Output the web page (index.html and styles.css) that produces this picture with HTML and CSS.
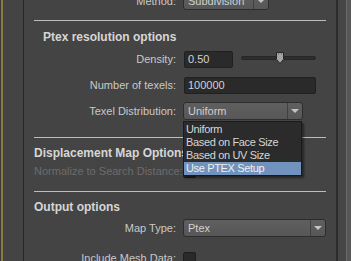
FILE: index.html
```html
<!DOCTYPE html>
<html lang="en">

<head>
    <meta charset="UTF-8">
    <meta name="viewport" content="width=device-width, initial-scale=1.0">
    <title>Ptex options</title>
    <link rel="stylesheet" href="styles.css">
</head>

<body>
    <div class="window">
        <div class="edge"></div>
        <div class="gutter"></div>

        <div class="frame">
            <div class="row row-method">
                <span class="label">Method:</span>
                <div class="combo combo-method"><span class="combo-text">Subdivision</span><span class="combo-btn"><i class="arrow"></i></span></div>
            </div>

            <hr class="sep sep-first">

            <h3 class="heading heading-ptex">Ptex resolution options</h3>

            <div class="row row-density">
                <span class="label">Density:</span>
                <div class="field field-density">0.50</div>
                <div class="slider">
                    <div class="track"></div>
                    <svg class="thumb" width="10" height="12" viewBox="0 0 10 12">
                        <path d="M1.5 0.5 H8.5 V7.5 L5 11.5 L1.5 7.5 Z" fill="#a4a4a4" stroke="#262626" stroke-width="1"/>
                        <path d="M3 2 H4 M6 2 H7" stroke="#555" stroke-width="1"/>
                    </svg>
                </div>
            </div>

            <div class="row">
                <span class="label">Number of texels:</span>
                <div class="field field-texels">100000</div>
            </div>

            <div class="row row-dist">
                <span class="label">Texel Distribution:</span>
                <div class="combo combo-dist"><span class="combo-text">Uniform</span><span class="combo-btn"><i class="arrow"></i></span></div>

                <!-- open popup list -->
                <ul class="menu">
                    <li>Uniform</li>
                    <li>Based on Face Size</li>
                    <li>Based on UV Size</li>
                    <li class="active">Use PTEX Setup</li>
                </ul>
            </div>

            <hr class="sep sep-second">

            <h3 class="heading">Displacement Map Options</h3>

            <div class="row row-normalize">
                <span class="label label-left disabled">Normalize to Search Distance:</span>
                <div class="check"></div>
            </div>

            <hr class="sep sep-third">

            <h3 class="heading">Output options</h3>

            <div class="row row-maptype">
                <span class="label">Map Type:</span>
                <div class="combo combo-map"><span class="combo-text">Ptex</span><span class="combo-btn"><i class="arrow"></i></span></div>
            </div>

            <div class="row row-mesh">
                <span class="label">Include Mesh Data:</span>
                <div class="check"></div>
            </div>
        </div>

        <div class="gutter-right"></div>
        <div class="scroll"></div>
    </div>
</body>

</html>
```

FILE: styles.css
```css
* {
    padding: 0;
    margin: 0;
    box-sizing: border-box;
}

body {
    background: #444444;
    font-family: "Liberation Sans", Arial, sans-serif;
    font-size: 11px;
    color: #c9c9c9;
    overflow: hidden;
}

div.window {
    display: flex;
    width: 351px;
    height: 261px;
    overflow: hidden;
}

.edge {
    width: 3px;
    border-left: 1px solid #3a3a3a;
    background: #8d7b3c;
}

.gutter {
    width: 20px;
    background: #444444;
}

div.frame {
    width: 315px;
    border-left: 1px solid #262626;
    border-right: 2px solid #2c2c2c;
    background: #444444;
    display: flex;
    flex-direction: column;
}

.gutter-right {
    width: 8px;
    background: #464646;
}

.scroll {
    flex: 1;
    border-left: 1px solid #6a6a6a;
    background: #575757;
}

/* rows */
.row {
    position: relative;
    display: flex;
    align-items: center;
    height: 18px;
    flex-shrink: 0;
}

.label {
    width: 152px;
    flex-shrink: 0;
    text-align: right;
    line-height: 13px;
    margin-right: 7px;
    white-space: nowrap;
}

.label-left {
    text-align: left;
    padding-left: 10px;
}

.disabled {
    color: #6c6c6c;
}

.row-method {
    margin-top: -8px;
}

.row-density {
    margin-top: 6px;
}

.row + .row {
    margin-top: 8px;
}

.row-normalize {
    margin-top: 2px;
}

.row-maptype {
    margin-top: 5px;
}

.row.row-mesh {
    margin-top: 12px;
}

/* separators */
.sep {
    border: none;
    height: 1px;
    background: #bdbdbd;
    margin: 0 10px;
    flex-shrink: 0;
}

.sep-first {
    margin-top: 10px;
}

.sep-second {
    margin-top: 17px;
}

.sep-third {
    margin-top: 11px;
}

.heading {
    font-size: 12px;
    font-weight: bold;
    line-height: 13px;
    color: #d6d6d6;
    padding-left: 10px;
    margin-top: 9px;
    white-space: nowrap;
}

.heading-ptex {
    padding-left: 19px;
    margin-top: 10px;
}

/* text fields */
.field {
    height: 17px;
    margin-left: 1px;
    background: #2a2a2a;
    border: 1px solid #202020;
    border-radius: 2px;
    padding-left: 3px;
    line-height: 15px;
    color: #d2d2d2;
    font-size: 11px;
}

.field-density {
    width: 49px;
}

.field-texels {
    width: 132px;
}

/* slider */
.slider {
    position: relative;
    width: 75px;
    height: 18px;
    margin-left: 8px;
}

.track {
    position: absolute;
    left: 0;
    right: 0;
    top: 6px;
    height: 4px;
    background: #2e2e2e;
    border: 1px solid #262626;
    border-radius: 2px;
}

.thumb {
    position: absolute;
    left: 34px;
    top: 2px;
}

/* combo boxes */
.combo {
    display: flex;
    height: 18px;
    background: linear-gradient(#5f5f5f, #575757);
    border: 1px solid #2d2d2d;
    border-radius: 3px;
    color: #d0d0d0;
}

.combo-text {
    flex: 1;
    padding-left: 4px;
    line-height: 16px;
}

.combo-btn {
    width: 15px;
    border-left: 1px solid #404040;
    display: flex;
    align-items: center;
    justify-content: center;
}

.arrow {
    width: 0;
    height: 0;
    border-left: 4px solid transparent;
    border-right: 4px solid transparent;
    border-top: 4px solid #c4c4c4;
}

.combo-method {
    width: 86px;
}

.combo-dist {
    width: 120px;
}

.combo-map {
    width: 143px;
}

/* popup list */
.menu {
    position: absolute;
    left: 159px;
    top: 19px;
    width: 119px;
    list-style: none;
    background: #2b2b2b;
    border: 1px solid #1b1b1b;
    box-shadow: 2px 2px 2px rgba(0, 0, 0, 0.45);
    padding: 1px 0 0 0;
    z-index: 2;
}

.menu li {
    height: 13px;
    line-height: 13px;
    padding-left: 2px;
    color: #d6d6d6;
    font-size: 11px;
    letter-spacing: -0.35px;
    white-space: nowrap;
}

.menu li.active {
    background: #7092bd;
    color: #f0f0f0;
}

/* check boxes */
.check {
    width: 13px;
    height: 13px;
    background: #2a2a2a;
    border: 1px solid #1e1e1e;
    border-radius: 2px;
}
```
